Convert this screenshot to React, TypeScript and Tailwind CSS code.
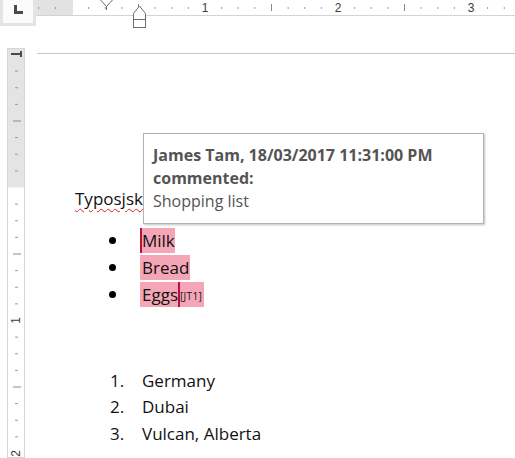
const INCH = 133;
const EIGHTH = INCH / 8;

function TopRuler() {
  const ticks: JSX.Element[] = [];
  for (let k = -2; k <= 27; k++) {
    const x = 72 + k * EIGHTH;
    if (k % 8 === 0) {
      if (k > 0)
        ticks.push(
          <text key={k} x={x} y={12} textAnchor="middle" fontSize="12" fontFamily="Liberation Sans, sans-serif" fill="#3c3c3c">
            {k / 8}
          </text>
        );
    } else if (k % 4 === 0) {
      ticks.push(<rect key={k} x={x - 0.5} y={4} width={1} height={7} fill="#8a8a8a" />);
    } else {
      ticks.push(<rect key={k} x={x - 0.5} y={7} width={1} height={2} fill="#9a9a9a" />);
    }
  }
  return (
    <svg className="absolute left-0 top-0" width={515} height={30}>
      <rect x={0} y={0} width={36} height={26} fill="#e4e4e4" />
      <rect x={3} y={0} width={30} height={23} fill="#fbfbfb" />
      <path d="M14 5h3v6h6v3h-9z" fill="#4a4a4a" />
      <rect x={36} y={0} width={37} height={15} fill="#e2e2e2" />
      <rect x={73} y={0} width={442} height={15} fill="#ffffff" />
      <rect x={36} y={15} width={479} height={1} fill="#d4d4d4" />
      {ticks}
      <path d="M100.5 0 L106.5 6.5 L112.5 0 M106.5 6.5 V10" stroke="#6d6d6d" fill="none" strokeWidth={1} />
      <path d="M133.5 13.5 L139.5 6 L145.5 13.5 V19.5 H133.5 Z" stroke="#6d6d6d" fill="#ffffff" strokeWidth={1} />
      <rect x={133.5} y={19.5} width={12} height={8} stroke="#6d6d6d" fill="#ffffff" strokeWidth={1} />
    </svg>
  );
}

function LeftRuler() {
  const zero = 139.5;
  const ticks: JSX.Element[] = [];
  for (let k = -7; k <= 17; k++) {
    const y = zero + k * EIGHTH;
    if (y < 14) continue;
    if (k % 8 === 0) {
      if (k > 0)
        ticks.push(
          <text key={k} x={0} y={0} transform={`translate(13 ${y}) rotate(-90)`} textAnchor="middle" fontSize="12" fontFamily="Liberation Sans, sans-serif" fill="#3c3c3c">
            {k / 8}
          </text>
        );
    } else if (k % 4 === 0) {
      ticks.push(<rect key={k} x={6} y={y - 0.5} width={8} height={1} fill="#8a8a8a" />);
    } else {
      ticks.push(<rect key={k} x={8} y={y - 0.5} width={3} height={1} fill="#9a9a9a" />);
    }
  }
  return (
    <svg width={18} height={410} className="block">
      <rect x={0.5} y={0.5} width={17} height={409} fill="#ffffff" stroke="#d6d6d6" />
      <rect x={1} y={1} width={16} height={zero - 1} fill="#e4e4e4" />
      <path d="M4 5h9v2h-9z M13 3h2v6h-2z" fill="#4a4a4a" />
      {ticks}
    </svg>
  );
}

export default function App() {
  return (
    <div className="relative w-[515px] h-[458px] overflow-hidden bg-white font-['Open_Sans',sans-serif] text-[17px] text-[#111]">
      <div className="relative z-10 h-[16px]">
        <TopRuler />
      </div>
      <div className="flex h-[442px]">
        <div className="w-[37px] shrink-0 pl-[7px] pt-[32px]">
          <LeftRuler />
        </div>
        <div className="flex-1 mt-[37px] border-t border-[#c8c8c8]">
          <p className="mt-[131px] pl-[38px] leading-[27px]">
            <span className="underline decoration-wavy decoration-[#e02020] decoration-1 underline-offset-[3px]">Typosjsk</span>
          </p>
          <ul className="mt-[15px]">
            <li className="flex items-center h-[27px] pl-[72px]">
              <span className="w-[7px] h-[7px] rounded-full bg-black" />
              <span className="ml-[24px] flex items-center h-[25px] bg-[#f5a6b6]">
                <span className="w-[2px] h-[25px] bg-[#b5123f]" />
                <span>Milk</span>
              </span>
            </li>
            <li className="flex items-center h-[27px] pl-[72px]">
              <span className="w-[7px] h-[7px] rounded-full bg-black" />
              <span className="ml-[24px] flex items-center h-[25px] bg-[#f5a6b6] pl-[2px] pr-[1px]">Bread</span>
            </li>
            <li className="flex items-center h-[27px] pl-[72px]">
              <span className="w-[7px] h-[7px] rounded-full bg-black" />
              <span className="ml-[24px] flex items-center h-[25px] bg-[#f5a6b6] pl-[2px]">
                <span>Eggs</span>
                <span className="w-[2px] h-[25px] bg-[#b5123f]" />
                <span className="text-[10px] pr-[2px] pt-[4px] tracking-[0.3px]">[JT1]</span>
              </span>
            </li>
          </ul>
          <ol className="mt-[59px]">
            {["Germany", "Dubai", "Vulcan, Alberta"].map((t, i) => (
              <li key={t} className="flex items-center h-[26.5px] pl-[73px]">
                <span className="w-[32px]">{i + 1}.</span>
                <span>{t}</span>
              </li>
            ))}
          </ol>
        </div>
      </div>
      <div className="absolute left-[143px] top-[133px] z-20 w-[341px] h-[91px] bg-white border border-[#b3b3b3] shadow-[1px_1px_2px_rgba(0,0,0,0.25)] px-[9px] pt-[10px] text-[16px] leading-[23px] text-[#545454]">
        <div className="font-bold">James Tam, 18/03/2017 11:31:00 PM</div>
        <div className="font-bold">commented:</div>
        <div>Shopping list</div>
      </div>
    </div>
  );
}
